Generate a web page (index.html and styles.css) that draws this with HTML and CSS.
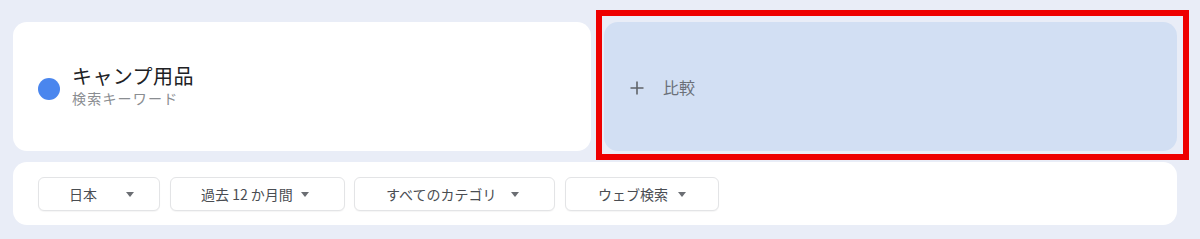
FILE: index.html
```html
<!DOCTYPE html>
<html lang="ja">
<head>
<meta charset="utf-8">
<link rel="stylesheet" href="styles.css">
</head>
<body>
<div class="page">
  <div class="top-row">
    <div class="card term-card">
      <span class="dot"></span>
      <div class="term-text">
        <div class="term-title">キャンプ用品</div>
        <div class="term-sub">検索キーワード</div>
      </div>
    </div>
    <div class="card compare-card">
      <svg class="plus" width="14" height="14" viewBox="0 0 14 14"><path d="M7 0.5V13.5M0.5 7H13.5" stroke="#5f6368" stroke-width="1.6" fill="none"/></svg>
      <span class="compare-label">比較</span>
    </div>
  </div>
  <div class="card filter-card">
    <div class="chip chip-country"><span>日本</span><span class="caret"></span></div>
    <div class="chip chip-time"><span>過去 12 か月間</span><span class="caret"></span></div>
    <div class="chip chip-cat"><span>すべてのカテゴリ</span><span class="caret"></span></div>
    <div class="chip chip-type"><span>ウェブ検索</span><span class="caret"></span></div>
  </div>
  <div class="highlight"></div>
</div>
</body>
</html>
```
FILE: styles.css
```css
* { box-sizing: border-box; }
html, body { margin: 0; padding: 0; }
body {
  background: #e9edf7;
  font-family: "Noto Sans CJK JP", "Noto Sans", Roboto, sans-serif;
  width: 1200px;
  height: 239px;
  overflow: hidden;
}
.page {
  position: relative;
  padding: 22px 23px 0 13px;
  display: flex;
  flex-direction: column;
  gap: 11px;
}
.top-row {
  display: grid;
  grid-template-columns: 578px 1fr;
  gap: 13px;
  height: 129px;
}
.card {
  background: #ffffff;
  border-radius: 14px;
}
.term-card {
  display: flex;
  align-items: center;
  padding-left: 25px;
  gap: 12px;
}
.dot {
  width: 22px;
  height: 22px;
  border-radius: 50%;
  background: #4a86ee;
  flex: none;
  margin-top: 4px;
}
.term-text {
  display: flex;
  flex-direction: column;
  margin-top: -4px;
}
.term-title {
  font-size: 20px;
  line-height: 26px;
  color: #202124;
  letter-spacing: 0.4px;
}
.term-sub {
  font-size: 14px;
  line-height: 18px;
  color: #8a8d91;
  letter-spacing: 1.2px;
}
.compare-card {
  background: #d2dff3;
  display: flex;
  align-items: center;
  padding-left: 26px;
  gap: 19px;
}
.plus { flex: none; margin-top: 2px; }
.compare-label {
  font-size: 16px;
  color: #6b7079;
  margin-top: 1px;
}
.filter-card {
  height: 63px;
  display: flex;
  align-items: center;
  padding: 0 25px;
  gap: 10px;
}
.chip {
  height: 34px;
  border: 1px solid #e3e4e6;
  border-radius: 6px;
  background: #fff;
  display: flex;
  align-items: center;
  padding-left: 30px;
  font-size: 14px;
  color: #4a4d52;
  box-shadow: 0 1px 1px rgba(0,0,0,0.04);
  margin-top: 1px;
}
.caret {
  width: 0;
  height: 0;
  border-left: 4px solid transparent;
  border-right: 4px solid transparent;
  border-top: 5px solid #6b6e73;
}
.chip-country { width: 122px; gap: 29px; }
.chip-time { width: 175px; gap: 8px; }
.chip-cat { width: 201px; gap: 15px; padding-left: 31px; margin-left: -1px; }
.chip-type { width: 154px; gap: 10px; padding-left: 32px; }
.highlight {
  position: absolute;
  left: 596px;
  top: 10px;
  width: 593px;
  height: 150px;
  border: 6px solid #ee0000;
}
```
